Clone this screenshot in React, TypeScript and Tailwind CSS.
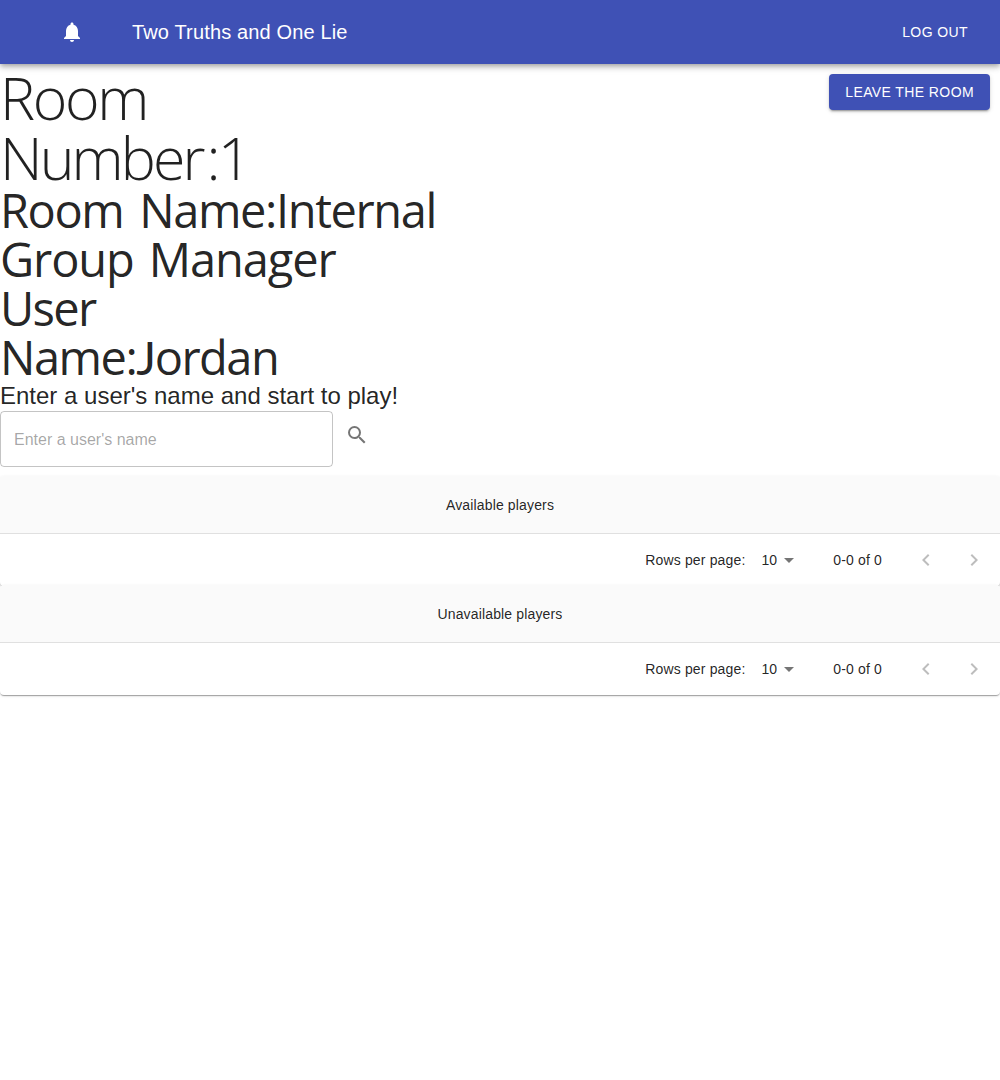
import {
  MdNotifications,
  MdSearch,
  MdArrowDropDown,
  MdKeyboardArrowLeft,
  MdKeyboardArrowRight,
} from "react-icons/md";

function PlayersTable({ title, className }: { title: string; className: string }) {
  return (
    <section
      className={`flex flex-col overflow-hidden rounded bg-white text-sm tracking-[0.01071em] shadow-[0_2px_1px_-1px_rgba(0,0,0,0.2),0_1px_1px_0_rgba(0,0,0,0.14),0_1px_3px_0_rgba(0,0,0,0.12)] ${className}`}
    >
      <header className="flex h-[58px] shrink-0 items-center justify-center border-b border-[#e0e0e0] bg-[#fafafa]">
        {title}
      </header>
      <footer className="flex h-[52px] shrink-0 items-center justify-end pr-0.5">
        <span>Rows per page:</span>
        <button className="ml-4 flex items-center">
          <span>10</span>
          <MdArrowDropDown className="size-6 text-black/54" />
        </button>
        <span className="ml-8">0-0 of 0</span>
        <div className="ml-5 flex">
          <button className="p-3 text-black/26" aria-label="Previous page">
            <MdKeyboardArrowLeft className="size-6" />
          </button>
          <button className="p-3 text-black/26" aria-label="Next page">
            <MdKeyboardArrowRight className="size-6" />
          </button>
        </div>
      </footer>
    </section>
  );
}

export default function App() {
  return (
    <div className="min-h-[1080px] bg-white font-['Liberation_Sans',Arial,sans-serif] text-black/87">
      <header className="relative z-10 flex h-16 items-center bg-[#3f51b5] pr-6 pl-15 text-white shadow-[0_2px_4px_-1px_rgba(0,0,0,0.2),0_4px_5px_0_rgba(0,0,0,0.14),0_1px_10px_0_rgba(0,0,0,0.12)]">
        <MdNotifications className="size-6" />
        <h1 className="ml-12 text-xl tracking-[0.0075em]">Two Truths and One Lie</h1>
        <button className="ml-auto px-2 text-sm tracking-[0.02857em]">LOG OUT</button>
      </header>

      <div className="flex items-start justify-between pr-2.5">
        <div className="pt-[3px] font-['Open_Sans',sans-serif] whitespace-nowrap">
          <h2 className="text-[59px] leading-[60px] font-light">
            <span className="block tracking-[-2.3px]">Room</span>
            <span className="block tracking-[-2.9px]">
              Number<span className="ml-1">:1</span>
            </span>
          </h2>
          <h3 className="-mt-px text-[47px] leading-[49px] font-normal">
            <span className="block tracking-[-1.4px] [word-spacing:5px]">Room Name:Internal</span>
            <span className="block tracking-[-1.1px] [word-spacing:4px]">Group Manager</span>
            <span className="block tracking-[-1.7px]">User</span>
            <span className="block tracking-[-1.5px]">
              Name:<span className="font-['Lato',sans-serif]">J</span>ordan
            </span>
          </h3>
        </div>
        <button className="mt-2.5 h-9 rounded bg-[#3f51b5] px-4 text-sm tracking-[0.02857em] text-white shadow-[0_3px_1px_-2px_rgba(0,0,0,0.2),0_2px_2px_0_rgba(0,0,0,0.14),0_1px_5px_0_rgba(0,0,0,0.12)]">
          LEAVE THE ROOM
        </button>
      </div>

      <h5 className="-mt-0.5 text-2xl leading-[31px]">Enter a user's name and start to play!</h5>
      <div className="flex">
        <input
          className="h-14 w-[333px] rounded border border-black/23 px-[13px] pt-0.5 text-base placeholder:text-black/36"
          placeholder="Enter a user's name"
        />
        <button className="ml-3 flex h-12 items-center text-black/54" aria-label="Search">
          <MdSearch className="size-6" />
        </button>
      </div>

      <PlayersTable title="Available players" className="mt-[9px] h-[110px]" />
      <PlayersTable title="Unavailable players" className="relative -mt-px h-[110px]" />
    </div>
  );
}
